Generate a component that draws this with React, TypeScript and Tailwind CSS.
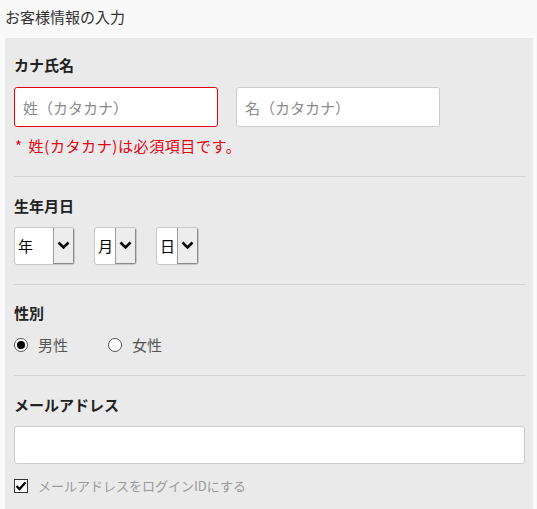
import { useState } from 'react'

const font = "font-['Noto_Sans_CJK_JP','Noto_Sans',sans-serif]"

function Chevron() {
  return (
    <svg width="13" height="9" viewBox="0 0 13 9">
      <path d="M1.5 1.5 L6.5 6.5 L11.5 1.5" fill="none" stroke="#000" strokeWidth="2.6" />
    </svg>
  )
}

function DateSelect({ label, width }: { label: string; width: string }) {
  return (
    <div className={`flex h-[38px] ${width} rounded-[3px] border border-[#c8c8c8] bg-white overflow-hidden`}>
      <span className="flex-1 flex items-center pl-[3px] text-[15px] text-black">{label}</span>
      <span className="w-[21px] flex items-center justify-center bg-[#ededed] border-l border-[#9a9a9a] border-r border-b border-r-[#8a8a8a] border-b-[#8a8a8a]">
        <Chevron />
      </span>
    </div>
  )
}

function Heading({ children }: { children: React.ReactNode }) {
  return <h3 className="h-[22px] leading-[22px] text-[15px] font-bold text-[#222]">{children}</h3>
}

export default function App() {
  const [gender, setGender] = useState<'m' | 'f'>('m')
  const [asLogin, setAsLogin] = useState(true)

  return (
    <div className={`w-[537px] h-[509px] overflow-hidden bg-[#f9f9f9] ${font}`}>
      <p className="pl-[5px] pt-[6px] h-[38px] text-[15px] leading-[22px] text-[#333]">お客様情報の入力</p>

      <div className="ml-[5px] w-[528px] bg-[#eaeaea] pl-[9px] pr-[8px] pt-[16px] pb-8">
        <section>
          <Heading>カナ氏名</Heading>
          <div className="mt-[11px] flex gap-[18px]">
            <input
              placeholder="姓（カタカナ）"
              className="w-[204px] h-[40px] rounded-[3px] border border-[#e50012] bg-white px-[8px] text-[15px] placeholder:text-[#8a8a8a] outline-none"
            />
            <input
              placeholder="名（カタカナ）"
              className="w-[204px] h-[40px] rounded-[3px] border border-[#cccccc] bg-white px-[8px] text-[15px] placeholder:text-[#8a8a8a] outline-none"
            />
          </div>
          <p className="mt-[8px] h-[22px] leading-[22px] pl-px text-[15px] tracking-[0.6px] text-[#e60012]">
            *<span className="ml-[6px]">姓(カタカナ)は必須項目です。</span>
          </p>
        </section>

        <hr className="mt-[19px] border-0 h-px bg-[#d4d4d4]" />

        <section className="mt-[18px]">
          <Heading>生年月日</Heading>
          <div className="mt-[10px] flex gap-[19px]">
            <DateSelect label="年" width="w-[61px]" />
            <DateSelect label="月" width="w-[43px]" />
            <DateSelect label="日" width="w-[43px]" />
          </div>
        </section>

        <hr className="mt-[19px] border-0 h-px bg-[#d4d4d4]" />

        <section className="mt-[17px]">
          <Heading>性別</Heading>
          <div className="mt-[10px] flex items-center h-[22px] text-[15px] text-[#555]">
            <label className="flex items-center cursor-pointer" onClick={() => setGender('m')}>
              <span className="w-[14px] h-[14px] rounded-full border border-[#555] bg-white flex items-center justify-center">
                {gender === 'm' && <span className="w-[8px] h-[8px] rounded-full bg-black" />}
              </span>
              <span className="ml-[10px]">男性</span>
            </label>
            <label className="ml-[40px] flex items-center cursor-pointer" onClick={() => setGender('f')}>
              <span className="w-[14px] h-[14px] rounded-full border border-[#555] bg-white flex items-center justify-center">
                {gender === 'f' && <span className="w-[8px] h-[8px] rounded-full bg-black" />}
              </span>
              <span className="ml-[10px]">女性</span>
            </label>
          </div>
        </section>

        <hr className="mt-[19px] border-0 h-px bg-[#d4d4d4]" />

        <section className="mt-[18px]">
          <Heading>メールアドレス</Heading>
          <input className="mt-[10px] block w-full h-[38px] rounded-[3px] border border-[#cccccc] bg-white px-[8px] text-[15px] outline-none" />
          <label className="mt-[11px] flex items-center h-[22px] cursor-pointer" onClick={() => setAsLogin(!asLogin)}>
            <span className="w-[14px] h-[14px] border border-[#333] bg-white flex items-center justify-center">
              {asLogin && (
                <svg width="12" height="10" viewBox="0 0 12 10">
                  <path d="M1.5 5 L4.5 8 L10.5 1.5" fill="none" stroke="#000" strokeWidth="2.4" />
                </svg>
              )}
            </span>
            <span className="ml-[10px] text-[13px] text-[#999]">メールアドレスをログインIDにする</span>
          </label>
        </section>
      </div>
    </div>
  )
}
